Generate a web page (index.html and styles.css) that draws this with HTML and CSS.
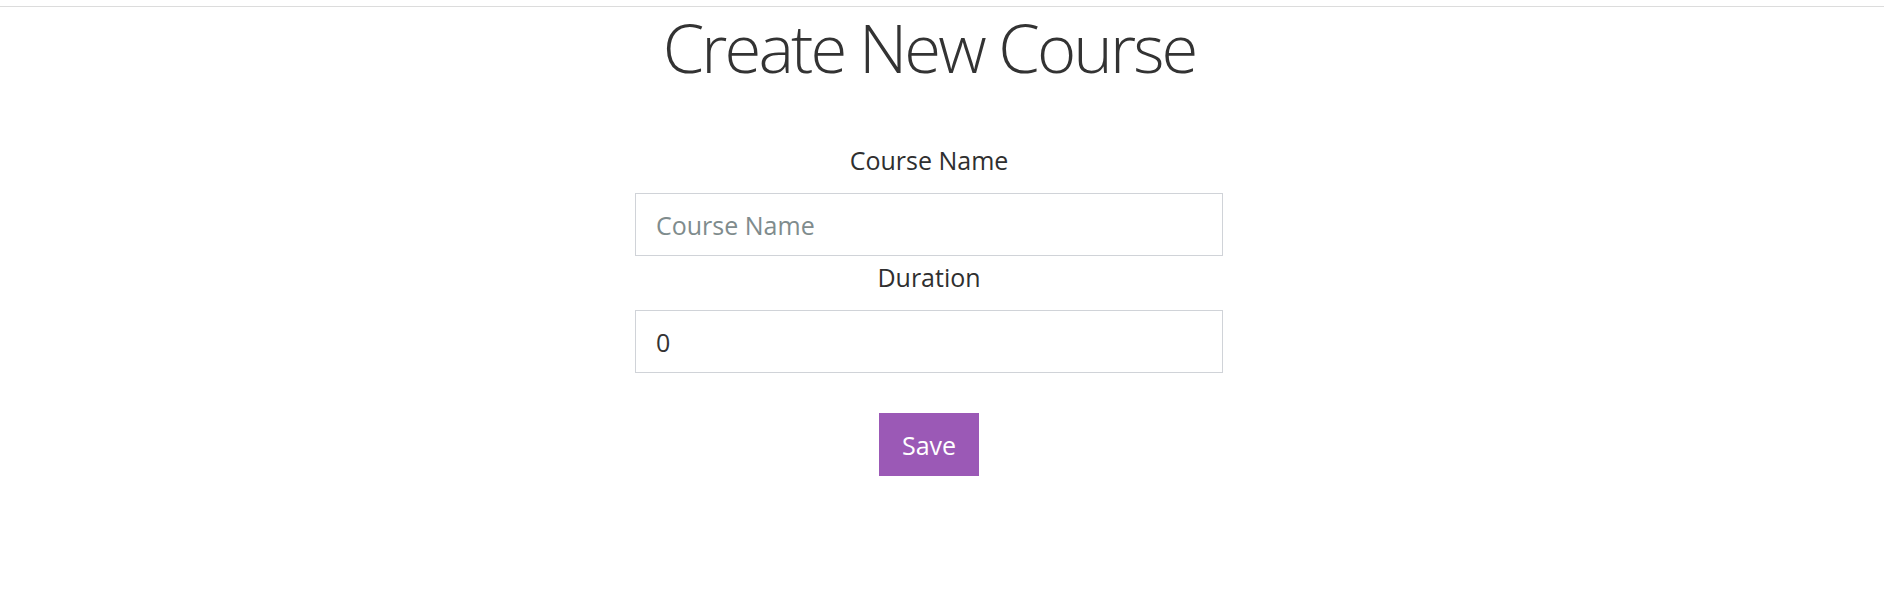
FILE: index.html
```html
<!DOCTYPE html>
<html lang="en">
<head>
<meta charset="utf-8">
<title>Create New Course</title>
<link rel="stylesheet" href="styles.css">
</head>
<body>
<hr class="top-rule">
<main class="page">
  <h1 class="title">Create New Course</h1>
  <form class="course-form">
    <div class="field">
      <label class="field-label" for="name">Course Name</label>
      <input class="field-input" id="name" type="text" placeholder="Course Name">
    </div>
    <div class="field">
      <label class="field-label" for="duration">Duration</label>
      <input class="field-input" id="duration" type="text" value="0">
    </div>
    <button class="save-btn" type="button">Save</button>
  </form>
</main>
</body>
</html>
```

FILE: styles.css
```css
html, body {
  margin: 0;
  padding: 0;
  background: #fff;
}
body {
  font-family: "Open Sans", "Noto Sans", sans-serif;
  color: #333;
}
.top-rule {
  margin: 6px 0 0;
  border: 0;
  border-top: 1px solid #dcdcdc;
  height: 0;
}
.page {
  display: flex;
  flex-direction: column;
  align-items: center;
  padding-right: 26px;
}
.title {
  margin: 3px 0 0;
  font-size: 67px;
  line-height: 74px;
  font-weight: 300;
  letter-spacing: -2.9px;
  color: #333;
}
.course-form {
  margin-top: 57px;
  width: 588px;
  display: flex;
  flex-direction: column;
  align-items: center;
}
.field {
  width: 100%;
  display: flex;
  flex-direction: column;
  align-items: center;
  margin-bottom: 2px;
}
.field-label {
  font-size: 25px;
  line-height: 38px;
  margin-bottom: 14px;
  color: #2f2f2f;
}
.field-input {
  box-sizing: border-box;
  width: 100%;
  height: 63px;
  padding: 0 20px;
  border: 1px solid #d0d3d8;
  border-radius: 0;
  font-family: inherit;
  font-size: 25px;
  color: #333;
  background: #fff;
  outline: none;
}
.field-input::placeholder {
  color: #7f8c8d;
  opacity: 1;
}
.save-btn {
  margin-top: 38px;
  width: 100px;
  height: 63px;
  border: 0;
  border-radius: 0;
  background: #9b59b6;
  color: #fff;
  font-family: inherit;
  font-size: 25px;
  padding: 0;
  cursor: pointer;
}
```
